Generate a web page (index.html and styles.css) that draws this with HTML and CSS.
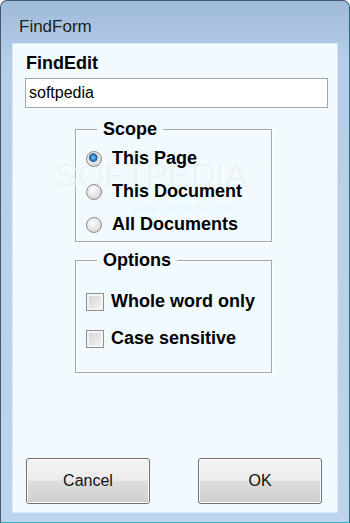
FILE: index.html
```html
<!DOCTYPE html>
<html lang="en">
<head>
  <meta charset="UTF-8" />
  <title>FindForm</title>
  <link rel="stylesheet" href="styles.css">
</head>
<body>
  <div class="window">
    <div class="titlebar">FindForm</div>

    <div class="client">
      <label class="edit-label" for="findEdit">FindEdit</label>
      <input class="edit" id="findEdit" type="text" value="softpedia">

      <fieldset class="group scope">
        <legend>Scope</legend>
        <label class="row"><input type="radio" name="scope" checked> This Page</label>
        <label class="row"><input type="radio" name="scope"> This Document</label>
        <label class="row"><input type="radio" name="scope"> All Documents</label>
      </fieldset>

      <fieldset class="group options">
        <legend>Options</legend>
        <label class="row"><input type="checkbox"> Whole word only</label>
        <label class="row"><input type="checkbox"> Case sensitive</label>
      </fieldset>

      <div class="buttons">
        <button type="button">Cancel</button>
        <button type="button">OK</button>
      </div>

      <div class="watermark" aria-hidden="true">
        <span class="wm-big">SOFTPEDIA<sup>™</sup></span>
        <span class="wm-url">www.softpedia.com</span>
      </div>
    </div>
  </div>
</body>
</html>
```

FILE: styles.css
```css
* { box-sizing: border-box; }
body {
  margin: 0;
  font-family: 'Liberation Sans', Arial, sans-serif;
  color: #000;
  background: #fff;
}
.window {
  width: 350px;
  height: 523px;
  display: flex;
  flex-direction: column;
  padding: 0 11px 9px 11px;
  border: 1px solid #46586a;
  border-right-color: #2f6b7e;
  border-bottom-color: #38a9c2;
  border-radius: 7px 7px 0 0;
  background: linear-gradient(#9fbad9, #b6cee9 60px, #bcd4ed);
}
.titlebar {
  height: 42px;
  padding: 16px 0 0 7px;
  font-size: 17px;
  line-height: 20px;
  color: #1e1e1e;
}
.client {
  position: relative;
  flex: 1;
  display: flex;
  flex-direction: column;
  padding: 9px 9px 8px 13px;
  background: #f0faff;
  border: 1px solid #d9eaf6;
}
.edit-label {
  font-size: 18px;
  font-weight: bold;
  line-height: 20px;
}
.edit {
  width: 303px;
  height: 30px;
  margin: 5px 0 0 -1px;
  padding: 0 3px;
  border: 1px solid #a6a6a6;
  background: #fff;
  font-family: inherit;
  font-size: 16px;
  color: #000;
  outline: none;
}
.group {
  width: 197px;
  margin: 0 0 0 49px;
  padding: 0 0 0 10px;
  border: 1px solid #a8a8a8;
  box-shadow: inset 1px 1px 0 #fff, 1px 1px 0 #fff;
  min-width: 0;
}
.group legend {
  margin-left: 11px;
  padding: 0 6px;
  font-size: 18px;
  font-weight: bold;
  line-height: 20px;
}
.scope {
  margin-top: 11px;
  padding-top: 3px;
  padding-bottom: 0;
}
.scope .row { height: 33px; }
.options {
  margin-top: 8px;
  padding-top: 13px;
  padding-bottom: 15px;
}
.options .row { height: 37px; }
.row {
  position: relative;
  z-index: 1;
  display: flex;
  align-items: center;
  font-size: 18px;
  font-weight: bold;
  white-space: nowrap;
}
.row input {
  appearance: none;
  -webkit-appearance: none;
  margin: 0;
  flex: none;
}
.row input[type="radio"] {
  width: 16px;
  height: 16px;
  margin-right: 10px;
  border: 1px solid #8c8c8c;
  border-radius: 50%;
  background: radial-gradient(circle at 40% 35%, #fdfdfd 0%, #e2e2e2 55%, #c9c9c9 100%);
}
.row input[type="radio"]:checked {
  background:
    radial-gradient(circle at 45% 40%, #9fd4ff 0, #3a8fd6 2px, #1b5c9c 4px, transparent 4.6px),
    radial-gradient(circle at 40% 35%, #fdfdfd 0%, #e2e2e2 55%, #c9c9c9 100%);
}
.row input[type="checkbox"] {
  width: 18px;
  height: 18px;
  margin-right: 7px;
  border: 1px solid #8e8f8f;
  box-shadow: inset 0 0 0 2px #f4f4f4;
  background: linear-gradient(135deg, #cfcfcf, #f7f7f7);
}
.buttons {
  margin-top: auto;
  display: flex;
  justify-content: space-between;
  padding-right: 6px;
}
.buttons button {
  width: 124px;
  height: 46px;
  border: 1px solid #707070;
  border-radius: 3px;
  background: linear-gradient(#f3f3f3 0%, #ebebeb 48%, #dddddd 52%, #cfcfcf 100%);
  box-shadow: inset 0 0 0 1px #fbfbfb;
  font-family: inherit;
  font-size: 16px;
  color: #111;
  padding: 0;
}
/* faint site watermark sitting over the dialog */
.watermark {
  position: absolute;
  left: 42px;
  top: 114px;
  pointer-events: none;
  color: rgba(150, 162, 172, 0.10);
}
.wm-big {
  display: block;
  font-size: 34px;
  line-height: 34px;
  text-shadow: 1px 1px 0 rgba(255, 255, 255, 0.6);
}
.wm-big sup {
  font-size: 11px;
  line-height: 14px;
  vertical-align: top;
  margin-left: 4px;
}
.wm-url {
  display: block;
  margin: 10px 0 0 77px;
  font-size: 12px;
  line-height: 14px;
}
```
